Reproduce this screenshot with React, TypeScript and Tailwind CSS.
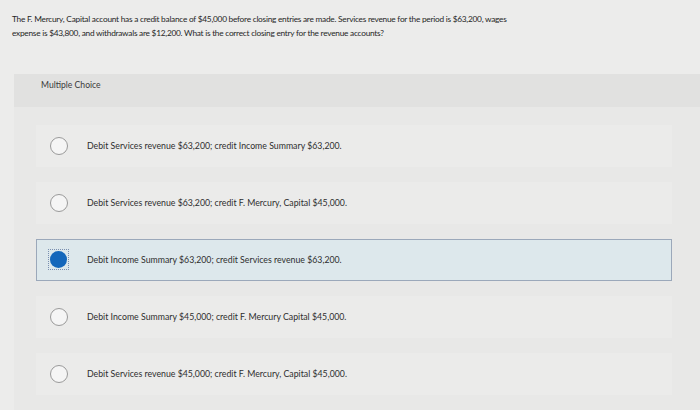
const options = [
  { text: "Debit Services revenue $63,200; credit Income Summary $63,200.", selected: false },
  { text: "Debit Services revenue $63,200; credit F. Mercury, Capital $45,000.", selected: false },
  { text: "Debit Income Summary $63,200; credit Services revenue $63,200.", selected: true },
  { text: "Debit Income Summary $45,000; credit F. Mercury Capital $45,000.", selected: false },
  { text: "Debit Services revenue $45,000; credit F. Mercury, Capital $45,000.", selected: false },
];

export default function App() {
  return (
    <div
      className="w-[700px] h-[410px] overflow-hidden bg-[#ececeb] text-[#2b2b2b]"
      style={{ fontFamily: "Lato, 'Open Sans', sans-serif" }}
    >
      <p className="w-[530px] px-[12px] pt-[12px] text-[8.3px] tracking-[-0.25px] leading-[14px] h-[40px] text-[#262626]">
        The F. Mercury, Capital account has a credit balance of $45,000 before closing entries are made. Services revenue for the period is $63,200, wages expense is $43,800, and withdrawals are $12,200. What is the correct closing entry for the revenue accounts?
      </p>

      <div className="ml-[14px] mt-[34px] w-[686px] h-[340px] bg-[#e8e8e7]">
        <div className="h-[33px] bg-[#e1e1e0] pl-[27px] pt-[5px] text-[8.6px] text-[#3a3a3a]">Multiple Choice</div>

        <div className="pt-[10px] pl-[22px]">
          {options.map((o, i) => (
            <div key={i} className="h-[57px] flex items-center">
              <div
                className={
                  "w-[636px] h-[42px] flex items-center pl-[13px] " +
                  (o.selected ? "bg-[#dde8ec] border border-[#9ba8ba]" : "bg-[#ebebea] border border-transparent")
                }
              >
                {o.selected ? (
                  <div className="w-[21px] h-[21px] -ml-[2px] mr-[-1px] border border-dotted border-[#7a8fb0] flex items-center justify-center">
                    <div className="w-[17px] h-[17px] rounded-full bg-[#1467bb]" />
                  </div>
                ) : (
                  <div className="w-[18px] h-[18px] rounded-full border border-[#9a9a9a] bg-[#f5f5f5]" />
                )}
                <span className="ml-[19px] text-[8.75px] text-[#2e2e2e]">{o.text}</span>
              </div>
            </div>
          ))}
        </div>
      </div>
    </div>
  );
}
